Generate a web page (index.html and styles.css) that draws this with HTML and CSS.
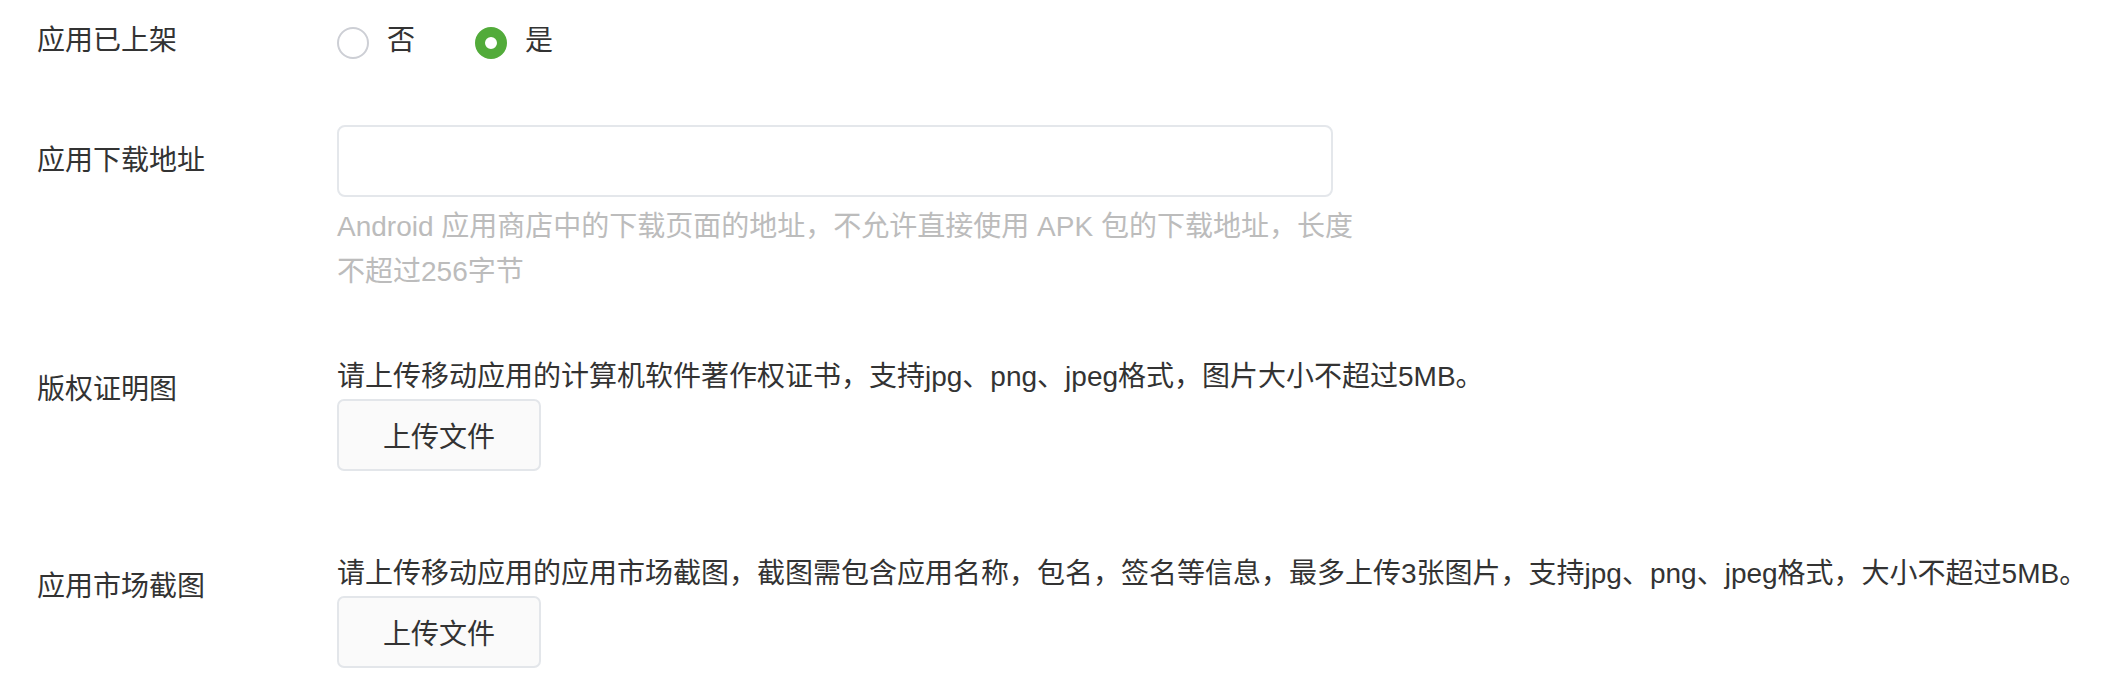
FILE: index.html
```html
<!DOCTYPE html>
<html lang="zh-CN">
<head>
<meta charset="utf-8">
<title>应用信息</title>
<link rel="stylesheet" href="styles.css">
</head>
<body>
<form class="form">
  <div class="form-item">
    <div class="form-label">应用已上架</div>
    <div class="form-control">
      <div class="radio-group">
        <label class="radio">
          <span class="radio-circle"></span>
          <span class="radio-text">否</span>
        </label>
        <label class="radio radio-checked">
          <span class="radio-circle"></span>
          <span class="radio-text">是</span>
        </label>
      </div>
    </div>
  </div>

  <div class="form-item">
    <div class="form-label">应用下载地址</div>
    <div class="form-control">
      <input class="text-input" type="text">
      <div class="help">Android 应用商店中的下载页面的地址，不允许直接使用 APK 包的下载地址，长度不超过256字节</div>
    </div>
  </div>

  <div class="form-item form-item-upload">
    <div class="form-label">版权证明图</div>
    <div class="form-control">
      <div class="desc">请上传移动应用的计算机软件著作权证书，支持jpg、png、jpeg格式，图片大小不超过5MB。</div>
      <button type="button" class="upload-btn">上传文件</button>
    </div>
  </div>

  <div class="form-item">
    <div class="form-label">应用市场截图</div>
    <div class="form-control">
      <div class="desc">请上传移动应用的应用市场截图，截图需包含应用名称，包名，签名等信息，最多上传3张图片，支持jpg、png、jpeg格式，大小不超过5MB。</div>
      <button type="button" class="upload-btn">上传文件</button>
    </div>
  </div>
</form>
</body>
</html>
```

FILE: styles.css
```css
html, body {
  margin: 0;
  padding: 0;
  background: #ffffff;
}

body {
  font-family: "Liberation Sans", "Noto Sans CJK SC", sans-serif;
  font-size: 28px;
  color: #333333;
}

.form {
  padding: 5px 0 0 37px;
}

.form-item {
  display: flex;
  align-items: flex-start;
  margin-bottom: 48px;
}

.form-item-upload {
  margin-bottom: 80px;
}

.form-label {
  width: 300px;
  flex: none;
  line-height: 72px;
  color: #333333;
}

.form-control {
  flex: 1;
  display: flex;
  flex-direction: column;
  align-items: flex-start;
}

.radio-group {
  display: flex;
  align-items: center;
  height: 72px;
  gap: 60px;
}

.radio {
  display: flex;
  align-items: center;
  gap: 18px;
  cursor: pointer;
}

.radio-circle {
  box-sizing: border-box;
  width: 32px;
  height: 32px;
  border-radius: 50%;
  border: 2px solid #cdcfd5;
  background: #ffffff;
  margin-top: 3px;
}

.radio-checked .radio-circle {
  border: 10px solid #52ab3a;
  background: #ffffff;
}

.radio-text {
  line-height: 40px;
  color: #333333;
}

.text-input {
  box-sizing: border-box;
  width: 996px;
  height: 72px;
  border: 2px solid #e4e7eb;
  border-radius: 8px;
  background: #ffffff;
  outline: none;
  font: inherit;
  padding: 0 20px;
}

.help {
  max-width: 1030px;
  margin-top: 7px;
  margin-bottom: 12px;
  line-height: 45px;
  color: #bcbcbc;
}

.desc {
  line-height: 45px;
  color: #333333;
  white-space: nowrap;
}

.upload-btn {
  box-sizing: border-box;
  width: 204px;
  height: 72px;
  border: 2px solid #e3e6ea;
  border-radius: 7px;
  background: #fafafa;
  font: inherit;
  color: #333333;
  padding: 0;
  cursor: pointer;
}
```
